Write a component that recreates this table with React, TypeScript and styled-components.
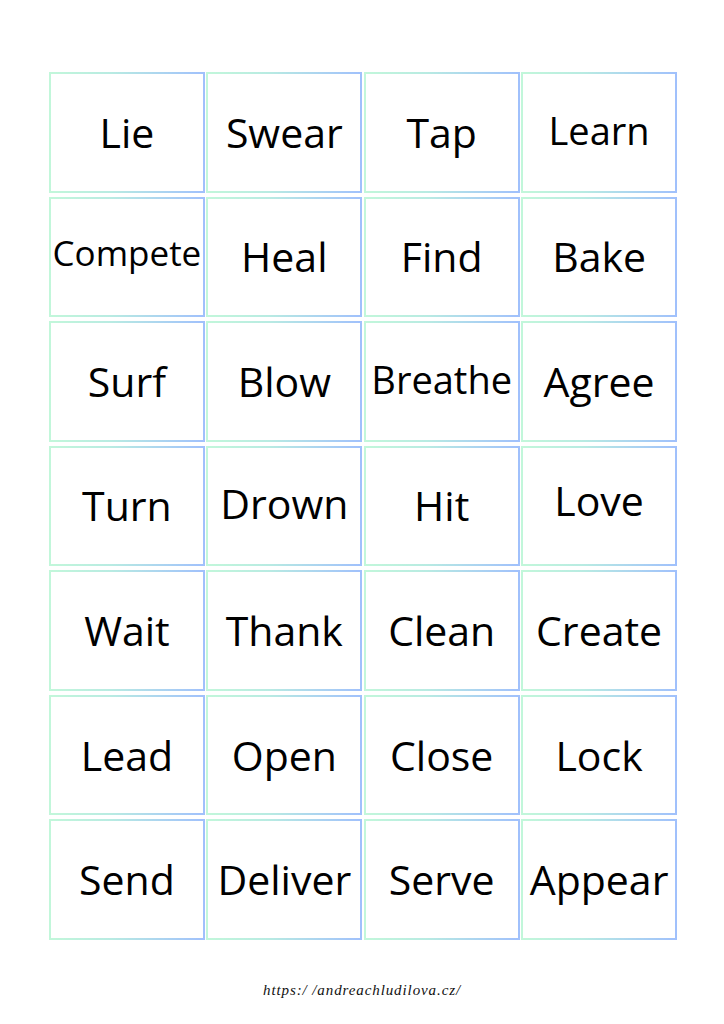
import React from "react";
import styled, { createGlobalStyle } from "styled-components";

const Global = createGlobalStyle`
  html, body { margin: 0; padding: 0; background: #ffffff; }
  body { width: 724px; height: 1024px; overflow: hidden; }
`;

const Page = styled.div`
  width: 724px;
  height: 1024px;
  box-sizing: border-box;
  padding: 72px 47px 0 49px;
  display: flex;
  flex-direction: column;
  align-items: stretch;
  background: #ffffff;
`;

const Grid = styled.div`
  display: grid;
  grid-template-columns: repeat(4, 1fr);
  grid-template-rows: repeat(7, 1fr);
  column-gap: 1.5px;
  row-gap: 4px;
  width: 628px;
  height: 868px;
`;

const Card = styled.div`
  box-sizing: border-box;
  border: 2.5px solid transparent;
  background:
    linear-gradient(#ffffff, #ffffff) padding-box,
    linear-gradient(90deg, #c2f7da 0%, #b8ebe2 40%, #a0c0fc 100%) border-box;
  display: flex;
  align-items: center;
  justify-content: center;
  overflow: hidden;
`;

const Word = styled.span<{ $size: number; $shift: number }>`
  font-family: "Open Sans", "DejaVu Sans", sans-serif;
  font-size: ${(p) => p.$size}px;
  color: #000000;
  line-height: 1;
  white-space: nowrap;
  transform: translateY(${(p) => p.$shift}px);
`;

const Footer = styled.div`
  margin-top: 42px;
  align-self: center;
  margin-right: 2px;
  font-family: "Liberation Serif", "DejaVu Serif", serif;
  font-style: italic;
  font-size: 15px;
  letter-spacing: 0.9px;
  color: #111111;
`;

type Item = { w: string; size?: number; shift?: number };

const items: Item[] = [
  { w: "Lie" },
  { w: "Swear" },
  { w: "Tap" },
  { w: "Learn", size: 38, shift: -2 },
  { w: "Compete", size: 35, shift: -4 },
  { w: "Heal" },
  { w: "Find" },
  { w: "Bake" },
  { w: "Surf" },
  { w: "Blow" },
  { w: "Breathe", size: 38, shift: -2 },
  { w: "Agree" },
  { w: "Turn" },
  { w: "Drown", shift: -2 },
  { w: "Hit" },
  { w: "Love", shift: -5 },
  { w: "Wait" },
  { w: "Thank" },
  { w: "Clean" },
  { w: "Create" },
  { w: "Lead" },
  { w: "Open" },
  { w: "Close" },
  { w: "Lock" },
  { w: "Send" },
  { w: "Deliver" },
  { w: "Serve" },
  { w: "Appear" },
];

export default function App() {
  return (
    <>
      <Global />
      <Page>
        <Grid>
          {items.map((it) => (
            <Card key={it.w}>
              <Word $size={it.size ?? 41} $shift={it.shift ?? 0}>
                {it.w}
              </Word>
            </Card>
          ))}
        </Grid>
        <Footer>https:/ /andreachludilova.cz/</Footer>
      </Page>
    </>
  );
}
